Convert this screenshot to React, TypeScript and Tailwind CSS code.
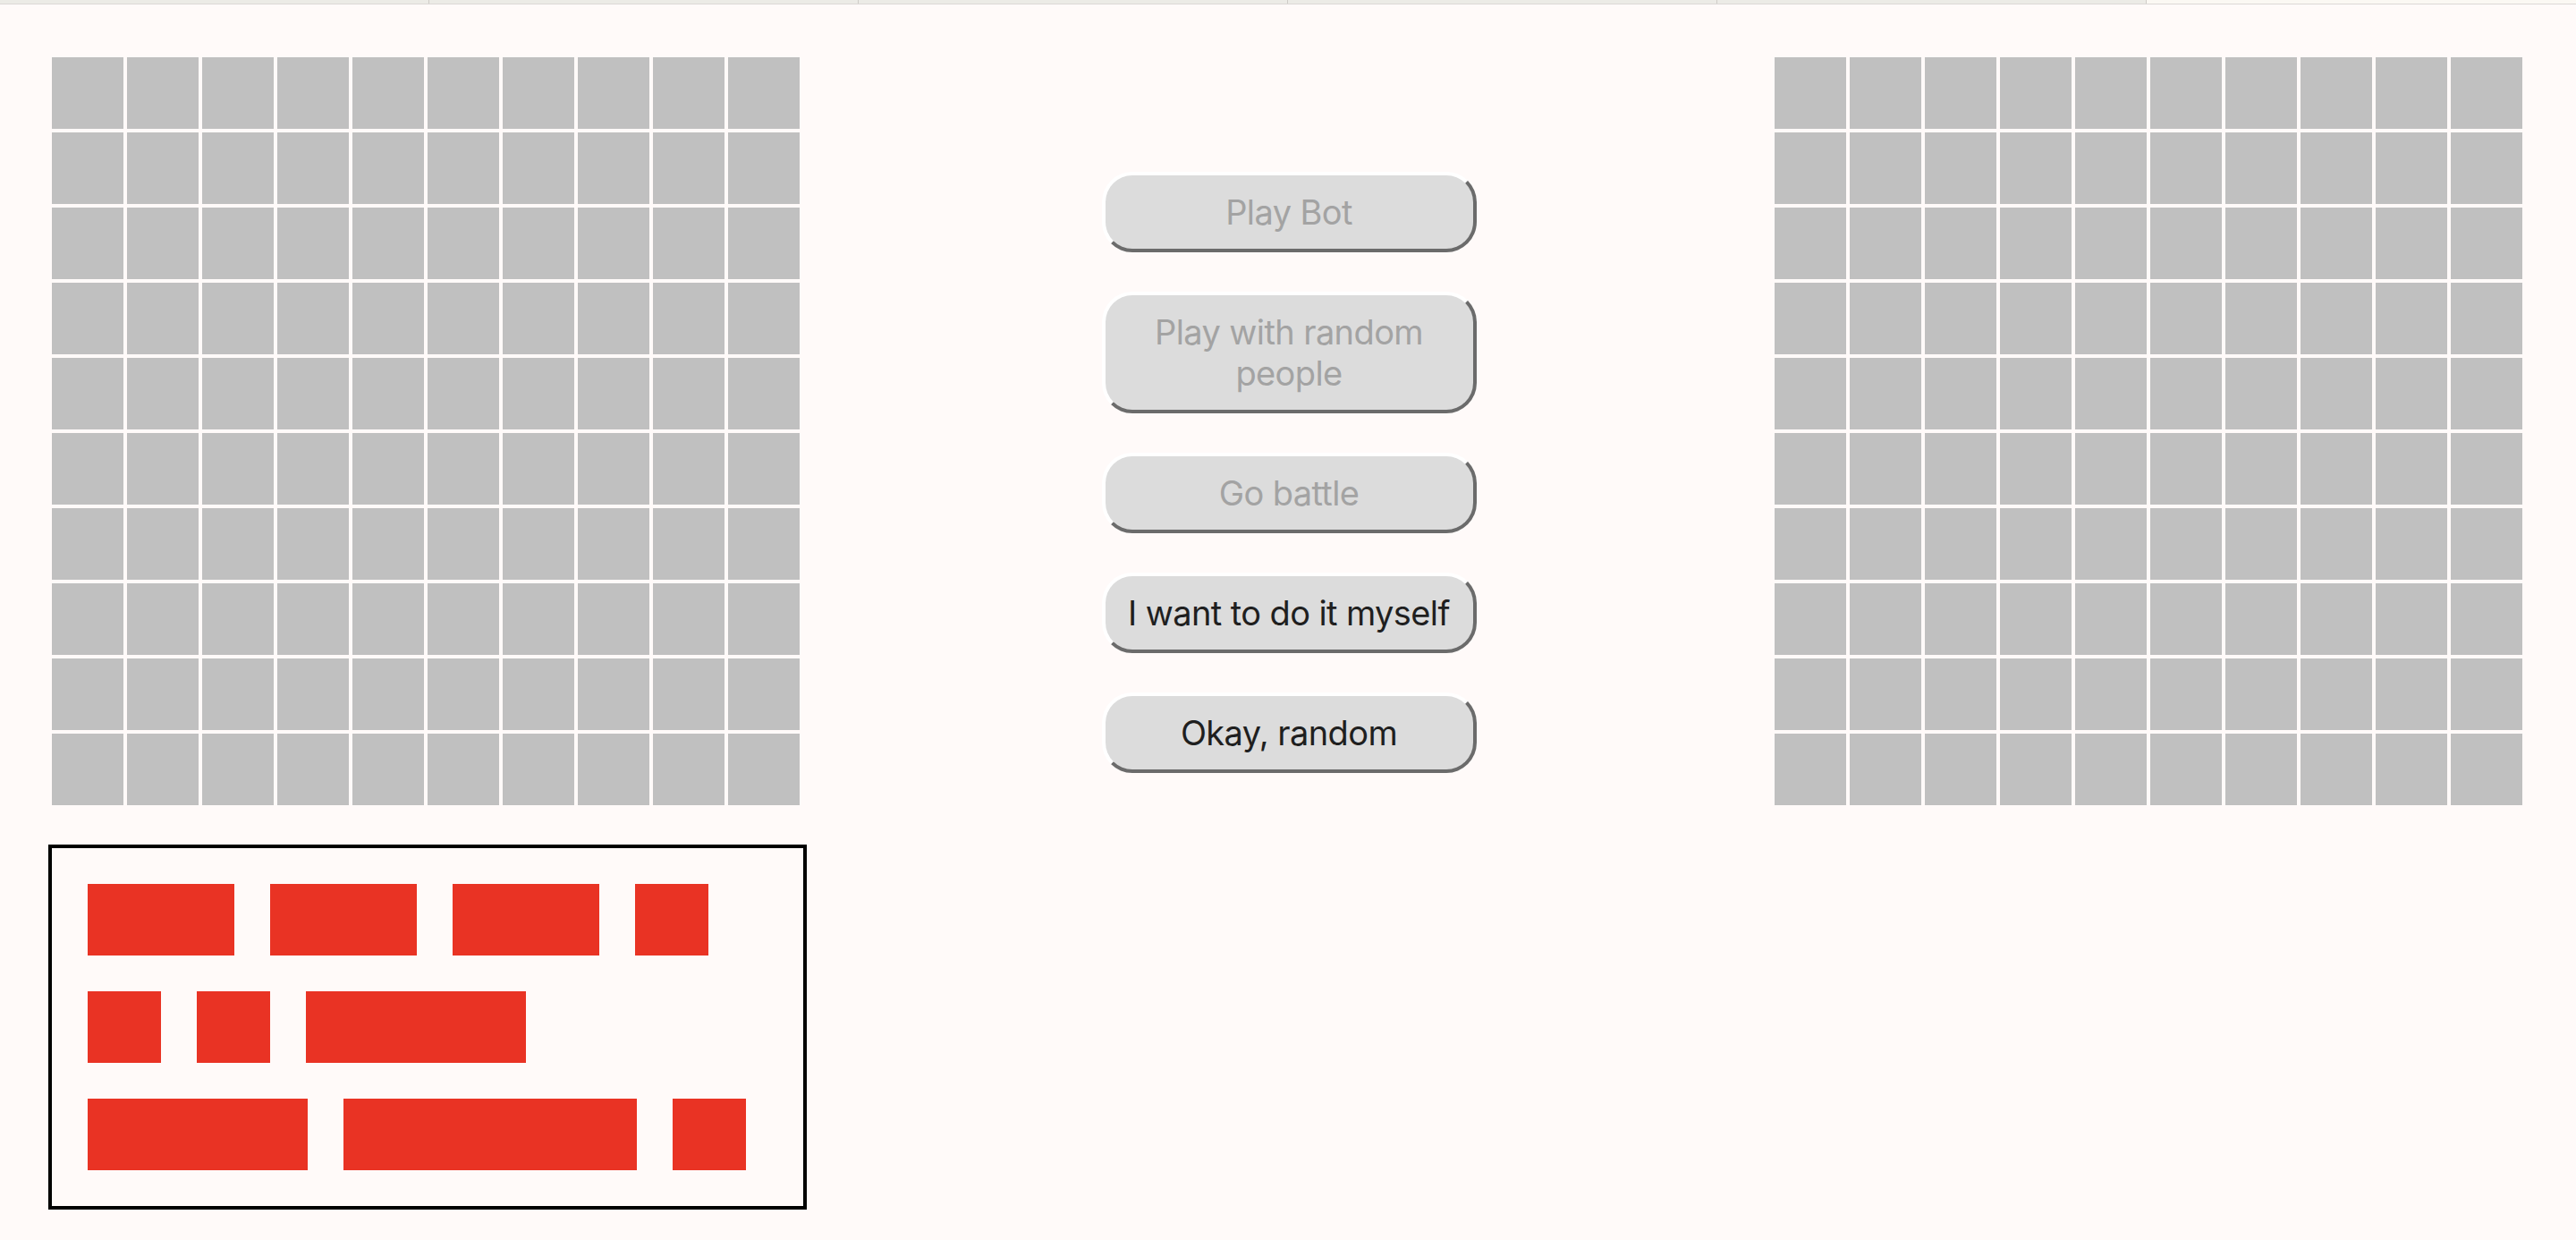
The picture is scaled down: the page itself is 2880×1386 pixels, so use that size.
import React from "react";

const cells = Array.from({ length: 100 }, (_, i) => i);

function Board() {
  return (
    <div className="grid grid-cols-[repeat(10,80px)] grid-rows-[repeat(10,80px)] gap-[4px]">
      {cells.map((i) => (
        <div key={i} className="bg-[#c0c0c0]" />
      ))}
    </div>
  );
}

const ships = [2, 2, 2, 1, 1, 1, 3, 3, 4, 1];

function Btn({ label, disabled }: { label: string; disabled?: boolean }) {
  return (
    <button
      className={
        "w-[419px] rounded-[34px] border-4 border-solid border-t-white border-l-white border-b-[#6b6b6b] border-r-[#6b6b6b] bg-[#dcdcdc] px-3 py-[18px] text-center text-[38px] leading-[46px] tracking-[-0.6px] " +
        (disabled ? "text-[#a3a3a3]" : "text-[#1f1f1f]")
      }
      style={{ fontFamily: "Inter, 'Noto Sans', sans-serif" }}
    >
      {label}
    </button>
  );
}

export default function App() {
  const tabs = [0, 1, 2, 3, 4, 5];
  return (
    <div className="min-h-[1386px] w-[2880px] bg-[#fffaf9]">
      <div className="flex h-[5px] border-b border-[#dcd8d6]">
        {tabs.map((t) => (
          <div
            key={t}
            className={
              "h-full w-[480px] " +
              (t === 5 ? "bg-[#fbf8f3]" : "border-r border-[#cfccc7] bg-[#ecebe6]")
            }
          />
        ))}
      </div>
      <div className="flex items-start justify-between pl-[54px] pr-[60px] pt-[59px]">
        <div className="flex w-[848px] flex-col gap-[44px]">
          <div className="ml-[4px]">
            <Board />
          </div>
          <div className="flex h-[408px] w-[848px] flex-wrap content-start gap-[40px] border-4 border-black p-[40px]">
            {ships.map((n, i) => (
              <div
                key={i}
                className="h-[80px] bg-[#e93324]"
                style={{ width: n * 82 }}
              />
            ))}
          </div>
        </div>
        <div className="mr-[4px] mt-[128px] flex flex-col gap-[44px]">
          <Btn label="Play Bot" disabled />
          <Btn label="Play with random people" disabled />
          <Btn label="Go battle" disabled />
          <Btn label="I want to do it myself" />
          <Btn label="Okay, random" />
        </div>
        <div>
          <Board />
        </div>
      </div>
    </div>
  );
}
